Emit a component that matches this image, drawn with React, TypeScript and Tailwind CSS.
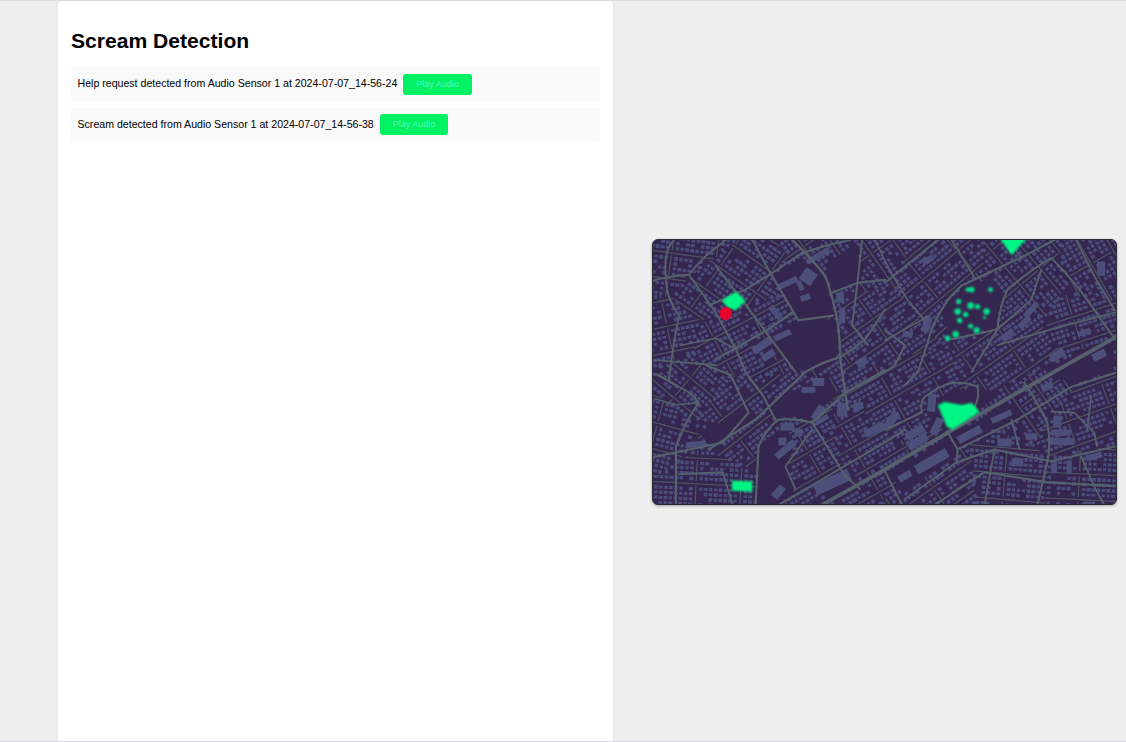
import React from "react";

type P = [number, number];

const roads: [string, number][] = [
  ["M822 506L885 470L948 433L1058 370L1118 336", 3.8],
  ["M652 280Q665 276 688 274Q695 265 705 255L725 239", 2],
  ["M673 239Q662 250 665 277Q664 295 678 315Q672 345 668 380", 2],
  ["M688 274L715 312L735 349L745 372L762 395L775 420", 2.1],
  ["M708 305L745 289L772 272L802 252L828 244L850 239", 2.1],
  ["M752 239L768 269L798 320L833 315", 2.1],
  ["M792 239Q815 262 825 275Q832 295 837 319Q840 340 840 359L842 372L845 393L848 410", 2.3],
  ["M715 265L745 304L775 345L795 372", 2.1],
  ["M715 359L745 342L768 329L792 312", 2.1],
  ["M680 345L715 338L735 349", 1.7],
  ["M654 360L715 365", 1.8],
  ["M832 292L858 282L885 279", 2],
  ["M862 239L857 285L852 325L868 345", 1.9],
  ["M885 309Q875 325 865 339Q852 350 840 357Q822 362 805 372L755 420L708 450", 2.2],
  ["M885 282L938 239", 2],
  ["M952 239L975 277", 2],
  ["M962 285L985 274L1025 255L1055 239", 2.1],
  ["M962 285Q950 295 942 309Q932 325 928 342L918 372L905 385", 2.1],
  ["M952 339L985 332L998 329Q1000 305 1008 289Q1030 270 1052 257Q1070 275 1088 299L1116 339", 2.1],
  ["M972 372L998 329L1032 299L1042 269", 1.9],
  ["M998 345L1052 329L1116 312", 1.9],
  ["M885 330L905 345L895 365L885 372L845 393", 2],
  ["M1077 239L1095 275L1116 310", 2],
  ["M812 423Q795 418 778 420Q765 430 758 447L755 506", 2.2],
  ["M812 423L845 393L885 370", 2.2],
  ["M812 423L845 477L860 490", 2],
  ["M812 430L785 467L795 490", 1.9],
  ["M778 506L885 443L905 430", 2],
  ["M652 458L722 443L748 413L730 375L705 365", 2.1],
  ["M675 506L675 447Q685 420 698 403Q690 392 678 387L655 374", 2.1],
  ["M678 475L722 473L732 506", 1.9],
  ["M654 399L675 405L698 403", 1.7],
  ["M885 430L922 413Q920 402 925 397Q940 385 952 383Q968 382 978 387Q980 398 975 407", 2],
  ["M948 433L958 450L957 463", 2],
  ["M958 450L1018 420L1072 387L1116 373", 2.1],
  ["M1025 383Q1040 405 1048 423Q1052 445 1048 463L1038 506", 2.1],
  ["M1012 420L1020 450", 1.8],
  ["M957 463L995 450L1052 462L1116 447", 2.1],
  ["M885 472L902 506", 2],
  ["M905 500L957 463", 1.9],
  ["M935 506L985 473L1048 483L1116 487", 2.1],
  ["M995 450L985 506", 1.9],
  ["M1082 457L1095 487L1105 506", 1.8],
  ["M1052 412L1075 413L1095 433L1098 447", 1.8],
  ["M1092 397L1088 430", 1.7],
  ["M885 340L930 315", 1.6],
  ["M875 239L890 270L908 300L925 320", 1.7],
  ["M1010 239L1022 258", 1.6],
];

const empties: P[][] = [
  [[770, 275], [800, 255], [825, 278], [835, 315], [800, 320]],
  [[750, 345], [795, 320], [835, 318], [838, 362], [800, 372], [785, 360]],
  [[962, 287], [990, 275], [1005, 290], [995, 328], [950, 340], [942, 310]],
  [[760, 405], [825, 375], [835, 395], [812, 420], [778, 418]],
  [[758, 450], [785, 425], [795, 440], [785, 470], [795, 490], [775, 506], [755, 506]],
  [[925, 400], [975, 385], [1000, 395], [950, 432], [930, 425]],
  [[885, 475], [950, 436], [1015, 400], [1020, 418], [958, 450], [905, 495]],
  [[825, 265], [858, 239], [860, 282], [832, 290]],
  [[1045, 368], [1116, 335], [1116, 372], [1075, 385]],
  [[700, 432], [748, 408], [755, 420], [708, 450]],
  [[810, 484], [850, 465], [865, 490], [830, 506]],
];

const seeds: [number, number, number][] = [
  [675, 258, 8], [705, 295, 35], [672, 330, -12], [720, 340, -28], [690, 385, 40], [660, 430, 15],
  [700, 490, 3], [730, 420, -38], [815, 455, -30], [870, 260, 55], [880, 320, -35], [900, 400, -30],
  [930, 280, -40], [1040, 275, 50], [1090, 270, 60], [1020, 350, -35], [1080, 320, -18], [1075, 425, -20],
  [1040, 400, 55], [1010, 480, 5], [1085, 480, 3], [940, 490, -35], [860, 450, -30],
];

function inside(x: number, y: number, poly: P[]) {
  let c = false;
  for (let i = 0, j = poly.length - 1; i < poly.length; j = i++) {
    const [xi, yi] = poly[i];
    const [xj, yj] = poly[j];
    if (yi > y !== yj > y && x < ((xj - xi) * (y - yi)) / (yj - yi) + xi) c = !c;
  }
  return c;
}

let rs = 12345;
function rnd() {
  rs = (rs * 16807) % 2147483647;
  return rs / 2147483647;
}

function box(cx: number, cy: number, w: number, h: number, deg: number) {
  const a = (deg * Math.PI) / 180;
  const c = Math.cos(a);
  const s = Math.sin(a);
  const pts: P[] = [[-w / 2, -h / 2], [w / 2, -h / 2], [w / 2, h / 2], [-w / 2, h / 2]];
  return "M" + pts.map(([x, y]) => `${(cx + x * c - y * s).toFixed(1)} ${(cy + x * s + y * c).toFixed(1)}`).join("L") + "Z";
}

function owns(x: number, y: number, sx: number, sy: number) {
  let best = Infinity;
  let owner: [number, number] = [0, 0];
  for (const [qx, qy] of seeds) {
    const dist = (qx - x) ** 2 + (qy - y) ** 2;
    if (dist < best) {
      best = dist;
      owner = [qx, qy];
    }
  }
  return owner[0] === sx && owner[1] === sy;
}

function build() {
  let houses = "";
  let streets = "";
  for (const [sx, sy, deg] of seeds) {
    const a = (deg * Math.PI) / 180;
    const c = Math.cos(a);
    const s = Math.sin(a);
    for (let iu = -40; iu < 40; iu++) {
      for (let iv = -40; iv < 40; iv++) {
        const u = iu * 5;
        const v = iv * 5.2;
        const x = sx + u * c - v * s;
        const y = sy + u * s + v * c;
        if (x < 650 || x > 1119 || y < 237 || y > 507) continue;
        if (!owns(x, y, sx, sy)) continue;
        if (empties.some((p) => inside(x, y, p))) continue;
        const ru = ((iu % 9) + 9) % 9;
        const rv = ((iv % 5) + 5) % 5;
        if (rv === 4) {
          streets += box(x, y, 5.4, 1.3, deg);
          continue;
        }
        if (ru === 8) {
          streets += box(x, y, 1.3, 5.6, deg);
          continue;
        }
        if (rnd() < 0.18) continue;
        houses += box(x, y, 3.1 + rnd() * 1.2, 2.7 + rnd() * 1.1, deg);
      }
    }
  }
  return { houses, streets };
}

const { houses: houseD, streets: streetD } = build();

const big: [number, number, number, number, number][] = [
  [808, 276, 14, 14, 35], [788, 282, 20, 6, -25], [800, 285, 5, 10, -25], [805, 297, 10, 6, -20],
  [775, 312, 6, 16, -40], [782, 335, 18, 6, -25], [762, 345, 22, 8, -35], [768, 355, 14, 7, -35],
  [842, 315, 6, 16, 0], [818, 255, 25, 6, -30], [840, 297, 8, 10, 0], [862, 362, 12, 8, -30],
  [1032, 309, 18, 6, -50], [1025, 322, 14, 6, -45], [1008, 335, 14, 7, -40], [1058, 355, 16, 8, -30],
  [928, 259, 12, 6, -30], [908, 334, 10, 6, 10], [1102, 268, 8, 14, 0], [927, 324, 8, 16, 15],
  [1085, 332, 14, 5, -20], [1100, 355, 14, 8, -25], [818, 413, 8, 16, 35], [842, 410, 10, 14, 0],
  [858, 407, 10, 8, -30], [787, 427, 14, 8, 0], [798, 433, 8, 8, 0], [782, 442, 8, 8, 0],
  [785, 450, 24, 7, -40], [832, 483, 38, 12, -25], [808, 390, 14, 6, 0], [818, 382, 12, 8, 0],
  [875, 430, 22, 8, -25], [778, 493, 8, 14, 40], [695, 445, 20, 6, -5], [822, 420, 14, 5, -30],
  [1002, 417, 22, 6, -25], [970, 435, 26, 8, -28], [915, 433, 20, 8, -30], [918, 442, 22, 8, -30],
  [932, 462, 36, 10, -30], [905, 477, 14, 7, -30], [892, 420, 8, 18, 35], [932, 403, 8, 18, 5],
  [937, 427, 8, 18, 25], [1048, 387, 12, 7, -25], [1058, 422, 8, 12, 0], [1062, 433, 20, 6, 0],
  [1062, 442, 26, 7, 0], [1005, 443, 14, 8, 0], [1032, 437, 12, 6, 0], [1095, 457, 16, 6, -15],
  [1018, 463, 12, 8, 0], [1055, 468, 6, 12, 0], [1070, 468, 5, 14, 0], [1090, 505, 12, 5, 0],
];

const dots: [number, number, number][] = [
  [968, 289, 2.2], [972, 289, 3], [991, 289, 2.5], [959, 301, 2.6], [971, 305, 3.4], [978, 306, 2.6],
  [958, 311, 3.2], [966, 314, 2.6], [987, 311, 3.2], [985, 317, 1.5], [960, 320, 2.6], [971, 326, 2.5],
  [977, 330, 3], [956, 334, 3.2], [948, 338, 2.7],
];

function CityMap() {
  return (
    <div className="mt-px h-[266px] w-[465px] overflow-hidden rounded-[6px] border border-[#2c2c36] bg-[#35254f] shadow-[0_1px_3px_rgba(0,0,0,0.35)]">
      <svg viewBox="652 239 465 266" className="block h-full w-full" preserveAspectRatio="none">
        <defs>
          <filter id="soft" x="-5%" y="-5%" width="110%" height="110%">
            <feGaussianBlur stdDeviation="0.45" />
          </filter>
          <filter id="glow" x="-30%" y="-30%" width="160%" height="160%">
            <feGaussianBlur stdDeviation="0.9" />
          </filter>
        </defs>
        <g filter="url(#soft)">
          <rect x="650" y="237" width="469" height="270" fill="#35254f" />
          <path d={houseD} fill="#4a4c78" />
          <path d={streetD} fill="#4c5462" />
          {big.map(([x, y, w, h, a], i) => (
            <path key={i} d={box(x, y, w, h, a)} fill="#4c5079" />
          ))}
          {roads.map(([d, w], i) => (
            <path key={i} d={d} fill="none" stroke="#56616d" strokeWidth={w} strokeLinejoin="round" strokeLinecap="round" />
          ))}
        </g>
        <g filter="url(#glow)" fill="#00f585" stroke="#00f585" strokeWidth="1.5" strokeLinejoin="round">
          <path d="M722 300L735 292L744 300L735 309L727 306Z" />
          <path d="M1001 237L1027 237L1012 253Z" />
          <path d="M939 406L945 403L962 406L972 404L979 412L953 429L948 427Z" />
          <path d="M732 482L751 483L751 492L732 491Z" />
          {dots.map(([x, y, r], i) => (
            <circle key={i} cx={x} cy={y} r={r} fill="#00e58a" stroke="none" />
          ))}
        </g>
        <circle cx="725" cy="313" r="6.5" fill="#e6002e" filter="url(#soft)" />
      </svg>
    </div>
  );
}

function Row({ text }: { text: string }) {
  return (
    <div className="flex items-center rounded-[3px] bg-[#f9f9f9] px-[6.5px] py-[6.4px]">
      <span className="relative -top-[0.6px] whitespace-nowrap text-[10.6px] leading-[21px] text-black">{text}</span>
      <button className="ml-[6px] h-[21px] w-[68.6px] rounded-[3px] bg-[#00f162] text-center text-[9px] text-[#52fcc0]">
        Play Audio
      </button>
    </div>
  );
}

export default function App() {
  return (
    <div className="flex h-[742px] w-full overflow-hidden border-y border-[#d9dadd] bg-[#efefef] font-['Liberation_Sans',Arial,sans-serif]">
      <div className="ml-[58px] h-full w-[555px] rounded-t-[4px] bg-white px-[13px] shadow-[0_0_4px_rgba(0,0,0,0.05)]">
        <h1 className="pb-[12.4px] pt-[26px] text-[21.1px] font-bold leading-[28px] text-black">Scream Detection</h1>
        <div className="flex flex-col gap-[6.8px]">
          <Row text="Help request detected from Audio Sensor 1 at 2024-07-07_14-56-24" />
          <Row text="Scream detected from Audio Sensor 1 at 2024-07-07_14-56-38" />
        </div>
      </div>
      <div className="flex flex-1 items-center pl-[39px]">
        <CityMap />
      </div>
    </div>
  );
}
